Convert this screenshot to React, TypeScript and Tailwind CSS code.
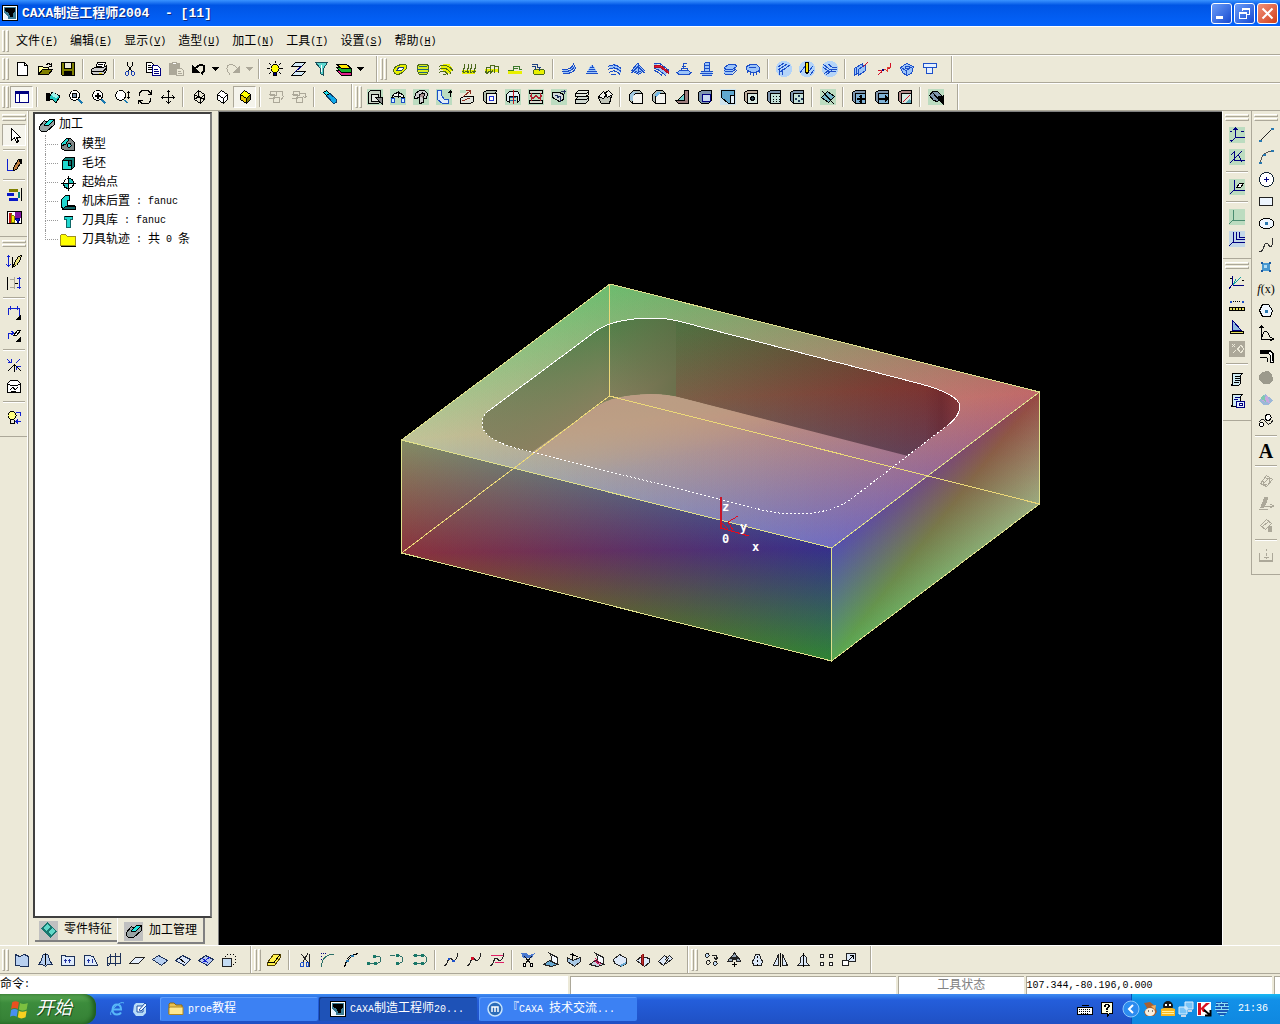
import { Fragment, type ReactNode } from "react";

// [path, fill, stroke]
type Shape = [string, string?, string?];

const K = "#000";
const N = "#000080";
const B = "#1c4fc8";
const G = "#aca899";
const T = "#008080";
const SEA = "#bcdcc0";
const SLATE = "#7f96ae";
const bg = (c: string): Shape => ["M0 0h16v16h-16z", c, "none"];
const disc = (c: string): Shape => ["M8 0a8 8 0 1 0 .1 0z", c, "none"];
const cube: Shape = ["M1.5 3.5l3-2h10l-1 3h-9v10l-3-3z", "#b4c0b0", K];
const cubeFront: Shape = ["M4.5 4.5h10v10h-10z", "#f4f4ee", K];
const blueCube: Shape = ["M1.5 3.5l3-2h10v3h-10v10l-3-3z", SLATE, K];
const blueFront: Shape = ["M4.5 4.5h10v10h-10z", "#7fb2d6", K];
const curve: Shape = ["M1 13.5q3 0 4-5t5 0q3 1 5-7", "none", "#222"];

const icons: Record<string, Shape[]> = {
  new: [["M3.5 1.5h7l3 3v10h-10z", "#fff"], ["M10.5 1.5v3h3"]],
  open: [["M1.5 13.5v-8h4l1 1h5v2", "#ffff9c"], ["M1.5 13.5l4-5h10l-4 5z", "#808000"], ["M9.5 3.5l2-1 2 1 1 1M14.5 2v3h-3"]],
  save: [["M1.5 1.5h13v13h-12l-1-1z", "#808000"], ["M4.5 1.5h7v6h-7z", "#ece9d8"], ["M4.5 10.5h7v4h-7z", K]],
  print: [["M4.5 7.5l2-6h8l-2 6z", "#fff"], ["M0.5 8.5l3-2h9l3-2v5l-3 4h-10l-2-1z", "#ccc"], ["M1 10.5h11l3-3M7 3.5h5M6 5.5h5"], ["M8 12h3", "none", "#d8c800"]],
  cut: [["M5.5 1v3l4 6M10.5 1v3l-4 6"], ["M3.5 11.5l1-1h2v3l-1 1h-1l-1-1zM9.5 10.5h2l1 1v2l-1 1h-1l-1-1z", "none", "#1a3fb0"]],
  copy: [["M1.5 1.5h5l2 2v8h-7z", "#fff"], ["M3 4.5h3M3 6.5h4M3 8.5h4"], ["M7.5 4.5h5l3 3v7h-8z", "#fff", N], ["M9 8.5h4M9 10.5h5M9 12.5h5", "none", N]],
  paste: [["M1 2h11v12h-11z", G, "none"], ["M4.5 1.5h4v2h-4z", "#fff", G], ["M8.5 7.5h5l2 2v5h-7z", "#ece9d8", G], ["M10 10.5h3M10 12.5h4", "none", G]],
  undo: [["M1 4v8h8z", K, "none"], ["M3 8.5q3-5 7-5 4 0 4 4 0 3-3 6M4 8.5q3-4 6-4 3 0 3 3 0 3-3 5"]],
  redo: [["M15 4v8h-8z", G, "none"], ["M13 8.500q-3-5-7-5-4 0-4 4 0 3 3 6", "none", G]],
  bulb: [["M8 3.5a4 4 0 1 0 .1 0z", "#ffff00"], ["M6.5 11.5h3v3h-3z", N], ["M8.5 0v2M2 2l2 2M14 2l-2 2M0 7.5h3M13 7.5h3M2 13l2-2M14 13l-2-2"]],
  sheets: [["M5.5 1.5h10l-4 4h-10z", "#d6ecf8"], ["M5.5 10.5h10l-4 4h-10z", "#d6ecf8"], ["M12 5l-7 6", "none", N]],
  filter: [["M2.5 1.5h12l-4 6v7l-3-2v-5z", "#5fd8d0", "#17505a"], ["M8 4l1 7", "none", "#fff"]],
  layers: [["M0.5 9.5l5 5h10v-3l-5-3z", "#e0208c"], ["M0.5 6.5l5 5h10v-3l-5-3z", "#18b030"], ["M0.5 3.5h10l5 4h-10z", "#ffe800"]],

  mill1: [["M1.5 10q0-4 6-6t7 1-5 7-8-2z", "#e8f000", "#4c6a1c"], ["M5 9q1-3 4-3t2 2-4 2-2-1z", "#fff", "#1c4080"]],
  mill2: [["M2 7q0-4 6-4t6 4-2 6h-8q-2-2-2-6z", "#d8ee20", "#4c6a1c"], ["M4 5.5h8M2 8.5h12M4 11.5h8", "none", "#1c6080"]],
  mill3: [["M1.5 8l4-5h6l3 5-2 5z", "#e8f000", "none"], ["M1 5.5q7-4 14 4M1 8.5q7-4 12 4M1 11.5q6-3 9 2M5 13.5h3", "none", "#4c6a1c"]],
  mill4: [["M1 9h14l-1 4h-13z", "#e8f000", "none"], ["M4 3l-2 9M8 3l-2 9M11 3l-2 9M15 3l-2 9M1 10l2 2 2-2M5 10l2 2 1-2M9 10l1 2 2-2M12 10l1 2 2-2", "none", "#4c6a1c"]],
  mill5: [["M1 8h14v3h-14z", "#e8f000", "none"], ["M2.5 13v-7h4v7M6.5 12v-8h4v8M10.5 11v-6h4v7M1 10l2 3 2-3M5 10l2 2 2-3", "none", "#4c6a1c"]],
  mill6: [["M1 10h14v3h-14z", "#e8f000", "none"], ["M1 9.5h5v-4h6v3h3M6 7.5h5", "none", "#3c7a2c"]],
  mill7: [["M3 11q0-3 6-3t6 3-6 3-6-3z", "#e8f000", "#4c6a1c"], ["M2 3.5h5v3h4M2 5.5h3v3M9 6v4", "none", "#1c4080"]],

  sweep1: [["M1.5 12.5h6l6-5v-4l-5 5-7 1z", "#9cc4f8", "none"], ["M1 8.5q9 1 12-6M1 10.5q10 1 13-6M2 12.5q10 1 13-6", "none", B]],
  sweep2: [["M3 13l2-7 3-2 3 2 2 7z", "#9cc4f8", "none"], ["M8 3.5v2M6 6.5h4M5 8.5h6M3 10.5h10M2 12.5h12", "none", B]],
  sweep3: [["M1 6l7-3 6 4v5l-6-4z", "#9cc4f8", "none"], ["M1 5.500q7-4 13 2M1 8.500q7-4 13 2M2 11.500q6-4 11 2M4 13.500h5", "none", B]],
  sweep4: [["M1.5 9.5l6-7 7 7-6 4z", "#9cc4f8", B], ["M4 9.5l4-4 4 4-4 2zM8.5 2v9M1 12l3-2M15 12l-3-2", "none", B]],
  sweep5: [["M1 3l6 1 8 6-2 4-12-7z", "#9cc4f8", "none"], ["M1 2.5h6l9 7M1 7.5l4 1 8 6M1 9.5l3 1 5 4", "none", B], ["M1 4h6l8 6v2l-8-6h-6z", "#e01830", "#b01028"]],
  sweep6: [["M1 11.5l3-2h8l3 2-2 2h-10z", "#9cc4f8", B], ["M5 9.5v-2h6v2M7.5 7v-4l3-1M6 5.5h4", "none", B]],
  sweep7: [["M5 2h5v8l4 2-2 2h-9l-2-2 4-2z", "#9cc4f8", "none"], ["M5.5 1.5h5M5.5 1.5v8M10.5 1.5v8M5 4.5h6M5 7.5h6M2 10.5h12M1 12.5h13M3 14.5h10", "none", B]],
  sweep8: [["M2 7l4-3h8v4l-4 5h-8z", "#9cc4f8", "none"], ["M2.5 6.5l4-3h7l1 2-4 3h-7zM2.5 9.5l1 1h7l4-3M2.5 12.5l1 1h7l4-4", "none", B]],
  sweep9: [["M1.5 8.5v-3l4-2h6l3 3v3l-4 2h-5z", "#9cc4f8", B], ["M4 6.5h7M5.5 10v4M8.5 11v4M11.5 10v4M2.5 9v3M14.5 9v3", "none", B]],
  patch1: [disc("#b4d4f8"), ["M2 6l6-4M2 9l9-6M4 11l10-7M3 13.5v-6M6 14v-6h3", "none", B]],
  patch2: [disc("#b4d4f8"), ["M1 12l6-8M8 13l6-8M11 14l4-5", "none", B], ["M6.5 1.5h3v9l-1 2h-1l-1-2z", "#f8e000"]],
  patch3: [disc("#b4d4f8"), ["M1 3l6 5h8M1 6l5 4h8M6 3l4 3h5M2 13l5-4M4 14l6-5", "none", B]],
  ruled: [["M1.5 7.5l8-5v6l-8 6z", "#9cc4f8", B], ["M5.5 8.5l7-5v6l-7 5zM3.5 7v6", "#9cc4f8", B], ["M10 6l5-5", "none", "#d01028"]],
  trackpt: [["M2 9.5h3v2l-3 2M11 7.5h2q1 0 2-5", "none", "#d01028"], ["M5 10q3-3 6 0v-4h4", "none", "#e04030"], ["M6 8h2v2h-2z", N, "none"]],
  frame3d: [["M1.5 6.5l6-4 7 3-2 7-5 2-4-3z", "#9cc4f8", B], ["M2 6.5l5 3 7-4M7.5 10v4M6 5h4v2h-4z", "none", B]],
  teeTool: [["M1.5 2.5h13v4h-13z", "#e4f0ff", B], ["M4.5 6.5v6h6v-6", "#e4f0ff", B]],

  window: [["M1.5 2.5h13v11h-13z", "#fff", N], ["M1 2h14v3h-14zM5 5h1v9h-1z", N, "none"]],
  redraw: [["M3 11l4-8 8 4-4 7-4-4z", "#20c8c0", K], ["M8 3l6 4-3 2-5-3z", "#a0f0e8", "none"], ["M1 12v-8h4v8z", K, "none"]],
  zoomWin: [["M6.5 1.5a5 5 0 1 0 .1 0z", "#fff"], ["M4.5 4.5h4v4h-4z", SLATE], ["M10 10l4 4M11 10l4 4M10 11l4 4", "none", "#1878b0"]],
  zoomIn: [["M6.5 1.5a5 5 0 1 0 .1 0z", "#fff"], ["M4 6h5v1h-5zM6 4h1v5h-1z", K], ["M10 10l4 4M11 10l4 4M10 11l4 4", "none", "#1878b0"]],
  zoomDyn: [["M6.5 1.5a5 5 0 1 0 .1 0z", "#fff"], ["M10 11l3 3M11 11l3 3", "none", "#1878b0"], ["M14.5 2v8M13 3.5h3M13 8.5h3"]],
  rotate: [["M2 7q0-6 6-6 4 0 6 4M14 9q0 6-6 6-4 0-6-4M14.5 1v4h-4M1.5 15v-4h4"]],
  pan: [["M8.5 1v14M1 8.5h14M6.5 3.5l2-2 2 2M6.5 12.5l2 2 2-2M3.5 6.5l-2 2 2 2M12.5 6.5l2 2-2 2"]],
  wire: [["M3.5 5.5l4-4 6 4v5l-4 4-6-4zM3.5 5.5l6 4 4-4M9.5 9.5v5M7.5 1.5v6l6 3M7.5 7.5l-4 3"]],
  hidden: [["M3.5 5.5l4-4 6 4v5l-4 4-6-4z", "#fff"], ["M3.5 5.5l6 4 4-4M9.5 9.5v5"]],
  shade: [["M3.5 5.5l4-4 6 4-4 4z", "#ffff00"], ["M3.5 5.5v5l6 4v-5z", "#e8c800"], ["M9.5 9.5l4-4v5l-4 4z", "#808000"]],
  group1: [["M2.5 2.5h6v4h-6zM5.5 8.5h6v5h-6z", "none", G], ["M0.5 5.5h6v4h-6M9 2.5h5v4M13 11l3-4", "none", G]],
  group2: [["M2.5 2.5h6v4h-6zM5.5 8.5h6v5h-6z", "none", G], ["M0.5 5.5h6v4h-6M8 4.5h6v3M12 7l2 2 2-2", "none", G]],
  torch: [["M1.5 3.5l3-2 10 9v3l-3 1z", "#10a8e8", "#10406c"], ["M1.5 3.5l3 3 3-2-3-3z", "#20e0f0", K]],

  solid1: [bg(SEA), ["M1.5 3.5l2-2h10v10l-2 3h-10z", "#c9d3c4"], ["M4.5 5.5h7v7h-7z", "#e4e8e0"], ["M8 8h7v7z", "#888", K]],
  solid2: [bg(SEA), ["M1.5 8.5l3-4 4-1 4 2 2 3-7-1z", "#f4f4ee"], ["M1.5 9.5h3v4h-3zM11.5 9.5h3v4h-3z", "#d8f0ff", B], ["M8.5 2v7"]],
  solid3: [bg(SEA), ["M1.5 9.5l1-5 4-3h5l3 3-1 5h-3v4l-4 1v-6l-4 1z", "#d0d0d0"], ["M6.5 8v-2l3-2 2 1-1 4", "#a89090"]],
  solid4: [bg(SEA), ["M1.5 1.5h4v5l3 4h4v4h-6l-5-4z", "#e0ecf8", B], ["M14.5 8v-6M12.5 4l2-2 2 2"]],
  solid5: [["M1.5 9.5l3-2h10v5l-3 2h-10z", "#e0e4dc"], ["M4 8l7-6M11 5v-4h-4M3 12l8-3", "none", "#8c3020"], ["M1 1h6v3h-6z", SEA, "none"]],
  solid6: [cube, cubeFront, ["M7.5 7.5h4v4h-4z", "#fff", "#2030d0"]],
  solid7: [bg(SEA), ["M1.5 5.5l3-3h8l2 3v6l-2 2v-6h-8v6l-3-2z", "#e0f0f4"], ["M5 8.5h6M5 11.5h6", "none", "#1060a0"], ["M8.5 1v14", "none", "#c01820"]],
  solid8: [bg(SEA), ["M1.5 1.5h13v3h-13zM1.5 11.5h13v3h-13z", "#d8dcd0"], ["M2 6.5l3 3 3-3 3 3 3-3M3.5 4v8M12.5 4v8", "none", "#b02030"]],
  solid9: [bg(SEA), ["M1.5 3.5h7l4 2v5l-4 2-7-4z", "#d0d8d8"], ["M4 6l5 2v5M13.5 1v4M10 2.5h5M6 9l4-2", "none", "#203060"]],
  solid10: [["M1.5 4.5l3-3h10v4l-3 2h-10z", "#e4e8e0"], ["M1.5 10.5l3-3h10v4l-3 3h-10z", "#d0d8d0"], ["M2 4.5h10l3-2M2 10.5h10l3-2"]],
  solid11: [["M2.5 7.5l12-1-2 8h-8l-3-5z", "#c0c4b8"], ["M1.5 7.5l5-5 3 3-3 4zM7.5 4.5l4-3 4 4-5 3z", "#f4f4ee"]],
  fillet1: [["M1.5 5.5l4-4h6l3 3v10h-10l-3-3z", "#b4c0b8"], ["M4.5 14.5v-7l3-3h7v10z", "#f4f4ee"], ["M2 5.5l3-3h5l-3 2-2 3v5l-3-2z", "#a0c8e0", "none"]],
  fillet2: [["M1.5 5.5l4-4h6l3 3v10h-10l-3-3z", "#b4c0b8"], ["M4.5 14.5v-7l4-3h6v10z", "#f4f4ee"], ["M3 6l3-3h4l-5 5z", "#70b8e8", "none"]],
  rib: [["M1.5 11.5h9v-10h4v13h-10z", "#9c7c7c"], ["M3.5 11.5l7-7v7z", "#70d0d0"]],
  shell: [["M1.5 3.5l3-2h10v10l-3 3h-7l-3-3z", SLATE], ["M5.5 5.5h8v7h-8z", "#c8d8f0", N]],
  draft: [bg("#cfe4ee"), ["M1.5 1.5h13v5h-4v8h-2l-7-6z", "#60a8d0"], ["M10.5 6.5h4v8h-4z", "#e4f0f8"]],
  hole: [["M1.5 3.5l3-2h10v13h-10l-3-3z", "#c0b0a0"], ["M4.5 4.5h10v10h-10z", "#d8e8e0"], ["M9.5 7.5l2 1v2l-2 1-2-1v-2z", "#304858"]],
  arrayL: [blueCube, ["M4.5 4.5h10v10h-10z", "#c4e0d8"], ["M7 7h1v1h-1zM10 7h1v1h-1zM13 7h1v1h-1zM7 10h1v1h-1zM10 10h1v1h-1zM13 10h1v1h-1zM7 12h1v1h-1zM10 12h1v1h-1zM13 12h1v1h-1z", K, "none"]],
  arrayC: [blueCube, ["M4.5 4.5h10v10h-10z", "#c4e0d8"], ["M9 6h2v2h-2zM6 9h2v2h-2zM12 9h2v2h-2zM9 11h2v2h-2z", "#203858", "none"]],
  basePlane: [bg(SEA), ["M1.5 8.5l6-6 7 5-6 6z", "#78b8c8"], ["M2 2l12 13"]],
  mold1: [blueCube, blueFront, ["M9 6h1v8h-1zM6 9h8v1h-8z", K], ["M8 7.5h3M8 12.5h3"]],
  mold2: [blueCube, blueFront, ["M5 9h6v1h-6zM11.5 7v5l3-2.5z", K]],
  mold3: [["M1.5 3.5l3-2h10v3h-10v10l-3-3z", "#b08888"], ["M4.5 4.5h10v10h-10z", "#d8e8e0"], ["M6 13l7-7", "none", "#d01028"], ["M8 14l4-4 2 1v3z", "#60a8b8", "none"]],
  mold4: [bg(SEA), ["M1.5 6.5l3-4h5l4 4-4 6-4-1z", SLATE], ["M4 3l10 11M10 8l5-1v8z", K]],

  cursor: [["M5.5 1.5v12l3-3 2 5 2-1-2-4h4z", "#fff"]],
  sketch: [["M1.5 2v11h6", "none", "#1020d0"], ["M7.5 13.5v-3l5-8 3 2-5 8z", "#c08040", K], ["M12 2h3v4z", K]],
  panelA: [["M3 2h9v3h-9z", "#808000", "none"], ["M1 6h7v3h-7zM3 11h9v3h-9z", "#0818c8", "none"], ["M12 5h2v6h-2z", T, "none"], ["M15.5 1v13"]],
  panelB: [["M1.5 2.5h14v12h-14z", "#fff", K], ["M9 3h6v6h-6z", "#8010a0", "none"], ["M3 4h3v10h-3z", "#c01818", "none"], ["M5.5 5.5l3 2v6h-3z", "#ffe800", "#808000"], ["M9 9h5l-2 5z", "#1020d0", N]],
  dimV: [["M2.5 2v12M0.5 4.5l2-2 2 2M0.5 11.5l2 2 2-2", "none", "#1020d0"], ["M6.5 4v11"], ["M7.5 13.5l1-4 4-6 3-1-1 4-4 6z", "#e8e080"]],
  dimH: [["M1.5 2v13"], ["M4 4.5h4v8h-4M8.5 2v12", "none", G], ["M9 8.5h3"], ["M13.5 2v12M11 3.5h4M11 12.5h4", "none", "#1020d0"]],
  dimArr: [["M2.5 10v-7h11v8M4.5 1v4M11.5 1v4", "none", "#1020d0"], ["M15 10v5h-6z", K, "none"]],
  dimEdit: [["M2.5 12v-6h5M5.5 4l2 2-2 2", "none", "#1020d0"], ["M7.5 8.5l4-5h3l-4 5z", "#fff"], ["M15 10v5h-6z", K, "none"]],
  snapPts: [["M1 2l4 4M14 2l-4 4M1.5 5.5h4v-4M10 9.5h5M10.500 9v4", "none", "#1020d0"], ["M8.5 7v8M8 8l-6 6M9 8l6 6"]],
  blankBox: [["M1.5 4.5l3-3h7l3 3v9h-13z", "#fff"], ["M1 4.5l4 2h6l4-2M4 10.5l3-2 2 2 3-2M5 12.5h5"]],
  lampDim: [["M6 2.5a4 4 0 1 0 .1 0z", "#ffff80"], ["M4.5 11v3h4v-3"], ["M10 3h4v4M15 12.5h-4M12 10.5l-2 2 2 2", "none", "#1020d0"]],

  csys1: [bg(SEA), ["M6.5 1v9h9M7 10l-5 5M4.5 3l2-2 2 2", "none", N], ["M1 4h2M12 4h3M1 13h2", "none", N]],
  csys2: [bg(SEA), ["M5.5 2v9h10M1 14l12-12M9 5l4 8M2 6l4-4", "none", N]],
  csys3: [bg(SEA), ["M5.5 1v10h10M5 11l-4 4", "none", N], ["M7.5 8.5l3-4h4l-3 4z", "#fff"]],
  csys4: [bg(SEA), ["M4.5 1v10h11M4 11l-4 4", "none", "#4a8c70"]],
  csys5: [bg("#c4d8e8"), ["M4.5 1v10h11M4 11l-4 4M7.500 1v7h8M10.500 1v5h5", "none", N]],
  measPt: [["M3.5 1v9l11 1M3 10l-3 4", "none", N], ["M4 10l8-8M4 10l3-6", "none", "#10a0a0"], ["M1 3h2M13 5h2", "none", K]],
  measLen: [["M1 4h2v2h-2zM13 4h2v2h-2z", B, "none"], ["M4 4.5h1M6 4.5h1M8 4.5h1M10 4.5h1", "none", K], ["M0.5 10.5h15v3h-15z", "#e8e060"], ["M3.5 11v2M6.5 11v2M9.5 11v2M12.5 11v2"]],
  measAng: [["M3.5 1.5l9 10h-9z", "#90b8e0", N], ["M1.5 12.5h13v2h-13z", "#e8e060", K]],
  measOff: [bg(G), ["M3 3l3 3M3 6l3-3M8 9l4-5 3 4-3 4-4-5M4 12l3-3", "none", "#ece9d8"]],
  doc1: [["M3.5 2.5h10l-2 2v8l-2 2h-7l1-2z", "#d0ecf4", K], ["M6 5.5h5M6 7.5h5M6 9.5h5M5 11.5h5"]],
  doc2: [["M3.5 1.5h10l-2 2v8l-2 2h-7l1-2z", "#d0ecf4", K], ["M6 4.5h5M5 6.5h4", "none", N], ["M7.5 8.500h8v6h-8z", "#e4f0ff", N], ["M10.5 10.5h3v2h-3z", "#fff", N]],

  line: [["M2 14l12-12", "none", "#222"], ["M1 13h3v2h-3zM13 1h3v2h-3z", "#2878b0", "none"]],
  arc: [["M2.5 15q0-12 12-13", "none", "#555"], ["M1 13h3v2h-3zM5 5h3v2h-3zM13 1h3v2h-3z", "#2878b0", "none"]],
  circle: [["M8.5 1.5a7 7 0 1 0 .1 0z", "#fff", "#123"], ["M6 8h5v1h-5zM8 6h1v5h-1z", N, "none"]],
  rect: [["M1.5 4.5h13v8h-13z", "#eef6ff", "#222"]],
  ellipse: [["M1.500 8.500q0-5 7-5t7 5-7 5-7-5z", "#eef6ff"], ["M7 7h3v3h-3z", "#2878b0", "none"]],
  spline: [["M1 14.500q3 1 5-5t5-1 4-7", "none", "#333"]],
  point: [["M4 4h8v8h-8z", "#4898d0", "none"], ["M3 3h2v2h-2zM11 3h2v2h-2zM3 11h2v2h-2zM11 11h2v2h-2z", "#1858a0", "none"], ["M6 6h3v3h-3z", "#b0dcf4", "none"]],
  polygon: [["M4.5 1.5h6l4 6-2 6h-8l-3-6z", "#eef6ff"], ["M7 7h3v3h-3z", "#2878b0", "none"]],
  conic: [["M3.5 1v13h12M1.5 3l2-2 2 2M12.500 12l3 2-3 2M4 12q3-12 8 0"]],
  offset: [["M2 3h10l3 3v9h-3v-7l-2-2h-8z", "#fff", K], ["M2 10h6l1 1v4M2 4h10l2 2v8M2 5h9"]],
  proj: [["M4 3l6-1 4 3 1 6-4 4h-6l-4-4v-4z", "#9c9a8c", "none"]],
  section: [["M1 10l6-7 8 6-4 5h-6z", "#9cb8d8", "none"], ["M4 10l5-6 3 8z", "#c8a8e0", "none"], ["M2 7l4-4 2 8z", "#80c8b0", "none"]],
  blend: [["M1 9q4-5 7 0t7-2", "none", "#222"], ["M10 1.5a3 3 0 1 0 .1 0z", "#fff"], ["M3.500 9.500a2 2 0 1 0 .1 0z", "#fff"]],
  dim1: [["M2.5 10.500l6-8 6 4-6 7zM5.500 10.500l5-5M5.500 8v3h3M8 5.500h3v3", "none", G]],
  dim2: [["M3 12l4-10 3 1-4 9zM1 14.5h9", G, G], ["M7 11.500h8M12.500 9l3 2-3 2", "none", G]],
  dim3: [["M2.5 8.500l6-6 5 4-6 6zM5 8.500l5-3", "none", G], ["M10 9h4v6h-4z", G, "none"]],
  dim4: [["M1.5 6v8h13v-8M8.5 2v2M8.5 6v3M8.5 11v1", "none", G], ["M6 10h5v1h-5zM1 13h14v2h-14z", G, "none"]],

  surf1: [["M1.5 2.5l4 2 5-2 4 2v10h-4l-9-1z", "#b8d0f0", "#1c3058"]],
  surf2: [["M5.500 12.500h-4q3-3 4-9l3-2 3 2q1 6 4 9h-5l-2 2z", "#b8d0f0", "#1c3058"], ["M8.5 2v11"]],
  surf3: [["M1.5 3.5h3l2 1h8v9h-13z", "#e0ecfc", "#1c3058"], ["M5.5 7v4M9.5 7v4M4 8.5h3M8 8.5h3", "none", "#2030a0"]],
  surf4: [["M1.5 3.5h3l6 1 4 9h-13z", "#e0ecfc", "#1c3058"], ["M5.5 7v4M9.5 7v4M4 8.5h3", "none", "#2030a0"]],
  surf5: [["M4.5 1.5v10l-3 3M4.5 4.5h10v7h-13M9.5 1v13M1.5 14v-8l3-2M14.5 1v10", "none", "#1c3058"]],
  surf6: [["M0.5 11.5l6-6h9l-6 6z", "#e4eefc", "#222"]],
  surf7: [["M0.5 7.5l6-4 9 5-6 5z", "#b8d0f0", "#1c3058"]],
  surf8: [["M0.5 8.5l7-5 8 4-6 6z", "#d8e4f8", "#1c3058"], ["M4 6l6 5"]],
  surf9: [["M0.5 8.5l7-5 8 4-6 6z", "#b8c8f0", "#1c3058"], ["M4 6l6 5M4 11l8-6", "none", "#1020d0"]],
  surf10: [["M1.5 6.5h9v8h-9z", "#c4dcf4", "#222"], ["M4 4h1v1h-1zM6 2h1v1h-1zM9 2h1v1h-1zM12 2h1v1h-1zM14 4h1v1h-1zM14 7h1v1h-1zM14 10h1v1h-1zM12 12h1v1h-1z", K, "none"]],
  eraser: [["M1.5 10.5l6-8h7v3l-6 8h-7z", "#fff04c", "#504000"], ["M2 10.5h6l6-8"]],
  trim: [["M4 2l7 8M11 1l-5 9M12.5 2v13", "none", "#222"], ["M4.500 10.500h2v4h-3v-3zM9.500 10.500h2v4h-2z", "none", B]],
  filletC: [["M1.5 15q0-12 13-13", "none", "#2c7068"], ["M1 1h1v1h-1zM3 1h1v1h-1zM5 1h1v1h-1zM1 4h1v1h-1zM1 7h1v1h-1z", N, "none"]],
  chamfer: [["M1.5 15l2-6M9 3.5l6-2M5 8l4-4M4 7l4-4"], ["M3 8h3v2h-3zM8 3h3v2h-3z", "#2878b0", "none"]],
  join1: [["M1 11.500h8q6 0 6-4t-6-3", "none", "#2c7068"], ["M1 10h3v3h-3zM7 3h3v3h-3zM8 10h3v3h-3z", "#187868", "none"]],
  join2: [["M1 3.500h5M8 3.500q6 0 6 4t-6 4", "none", "#2c7068"], ["M7 2h3v3h-3zM7 10h3v3h-3z", "#187868", "none"]],
  join3: [["M1 3.500h9q5 0 5 4t-5 4h-9", "none", "#2c7068"], ["M2 2h3v3h-3zM9 2h3v3h-3zM2 10h3v3h-3zM9 10h3v3h-3z", "#187868", "none"]],
  crv1: [curve, ["M9 8h3v2h-3zM5 6h2v2h-2z", "#1c4fc8", "none"]],
  crv2: [curve, ["M5 5h3v3h-3z", "#d01028", "none"]],
  crv3: [curve, ["M2 3.5h12M6 10.5h9", "none", "#e02068"]],
  strim: [["M1 1h5l3 2 6-2-3 5h-9z", "#4878d0", "none"], ["M4 4l8 9M12 4l-8 9", "none", "#111"], ["M3.5 11.5h2v3h-2zM10.5 11.5h2v3h-2z", "#fff"]],
  sfil: [["M6.5 1.5l8 4v7l-6-3v-5z", "#f4f8fc", "#222"], ["M0.5 12.5l6-4 8 4-6 2z", "#68a8d0", "#222"]],
  sjoin: [["M1.5 5.5l5 3 8-3v4l-6 5-7-5z", "#a8c8e4", "#222"], ["M6.5 8v-6l5 3M8 4l-4-2"]],
  sext: [["M6.5 1.5l8 4v7l-6-3v-5z", "#f4f8fc", "#222"], ["M0.5 12.5l6-4 8 4-6 2z", "#c8d0dc", "#222"], ["M6 6l6 6M5 8l6 5", "none", "#d01058"]],
  ssew: [["M1.5 7.5l6-5 7 4v5l-5 3-7-3z", "#dce8f8", "#222"], ["M8 13l6-3v2l-5 3z", "#68a8d0", "none"]],
  scut: [["M1.5 8.5l5-4 8 2v4l-5 4z", "#dce8f8", "#222"], ["M8 2v11l-2-2v-8", "#c03030", "#801010"]],
  spar: [["M0.5 9.5l6-6 4 3-5 7zM8.500 11.500l6-5-3-3-5 5", "#dce8f8", "#222"]],
  move: [["M4 1.5a2 2 0 1 0 .1 0zM12 9.500a2 2 0 1 0 .1 0z", "#c4dcf4", "#222"], ["M5 8.500a2 2 0 1 0 .1 0zM9 3.5h4v4M11 5.5l2 2 2-2", "none", "#222"]],
  rot: [["M8.5 1l3 4h-6zM1.5 9.5l2-3h10l1 3h-4v-2h-4v2z", "#98a8b8", "#222"], ["M8.5 10v5M6 12.500h5"]],
  mirrorP: [["M6.5 2.5h4q1 4 3 7l-1 4h-8l-1-4q2-3 3-7z", "#dce8f8", "#222"], ["M8.5 4v2M8.5 8v2M8.5 12v2"]],
  mirror: [["M6.5 2.5v11h-5zM10.5 2.5v11h5z", "#dce8f8", "#222"], ["M8.5 1v14"]],
  bell: [["M5.5 10.5v-5l3-3 3 3v5l3 3h-12z", "#dce8f8", "#222"], ["M8.5 1v14"]],
  array: [["M2.5 2.500h3v3h-3zM11.500 2.500h3v3h-3zM2.500 10.500h3v3h-3zM11.500 10.500h3v3h-3z", "#fff", "#222"]],
  scale: [["M5.5 1.5h9v8h-9z", "#dce8f8", "#222"], ["M1.5 8.5h6v5h-6z", "#fff", "#222"], ["M8 8l4-4M9 3.5h3v3"]],

  machining: [["M0.500 9.500l5-6 4 3 2-4h4v5l-8 7h-5l-2-2z", "#9aa4a4"], ["M5.500 7.500l5-5h5l-6 6h-4z", "#20e8e0"]],
  model: [["M1.5 7.5l5-6h4l4 4v8h-10l-3-2z", "#808888"], ["M5.5 7.500l-4 1v-2l5-5h3z", "#20d8d0"], ["M9 6.500a2 2 0 1 0 .1 0z", "#30e0e0"]],
  stock: [["M2.5 4.5l3-3h9v9l-3 3h-9z", "#108078"], ["M2.5 4.5h9v9h-9z", "#20d8d0"], ["M8.500 4.500h3v5h-3z", "#106868"]],
  startPt: [["M8.500 3.500q5 0 5 5h-5zM3.500 8.500h5v5q-5 0-5-5z", "#20c8c0"], ["M8.5 3.500a5 5 0 1 0 .1 0zM8.5 1v15M1 8.500h15"]],
  post: [["M1.5 12.5v-7l4-4h4v5h-2v5h7v3h-12z", "#20d8d0"], ["M6 12h9v3h-12z", "#106868", K]],
  toolLib: [["M4.5 3.5h8v3h-2v8h-4v-8h-2z", "#20d8d0", "#106868"], ["M4.5 3.5h8"]],
  folder: [["M0.5 13.5v-10l1-1h4l2 2h8v9z", "#ffff00", "#a09020"], ["M1 14.5h15v-10", "none", K]],
  feature: [["M0 6l6-6 10 9-7 7z", "#187870", "none"], ["M2 6l4-4 4 3-5 4zM7 10l4-4 3 3-4 4z", "#60d8c8", "none"]],
  app: [["M0.5 0.5h15v15h-15z", "#3c7c94", "#000"], ["M1.5 1.5h13v13h-13z", "none", "#fff"], ["M3 3h10v4l-2 1v4h-3l-1-4-4-2z", K, "none"], ["M2 8l4 3v3h-4z", "#e8f4ff", "none"]],
};

const Icon = ({ name }: { name: string }) => (
  <svg viewBox="0 0 16 16" className="size-4 shrink-0" shapeRendering="crispEdges" aria-hidden="true">
    {icons[name].map(([d, fill = "none", stroke = "#000"], i) => (
      <path key={i} d={d} fill={fill} stroke={stroke} />
    ))}
  </svg>
);

const pressed = ["window", "shade", "cursor"];

function Grip({ vertical }: { vertical?: boolean }) {
  return vertical ? (
    <span className="flex h-[13px] w-full shrink-0 flex-col items-center justify-center gap-px">
      <span className="h-[3px] w-6 border border-[#aca899] border-t-white border-l-white" />
      <span className="h-[3px] w-6 border border-[#aca899] border-t-white border-l-white" />
    </span>
  ) : (
    <span className="flex w-[10px] shrink-0 items-center justify-center gap-px">
      <span className="h-[22px] w-[3px] border border-[#aca899] border-t-white border-l-white" />
      <span className="h-[22px] w-[3px] border border-[#aca899] border-t-white border-l-white" />
    </span>
  );
}

// "|" is a separator, "v" the small drop-down arrow
function Tools({ items, vertical }: { items: string; vertical?: boolean }) {
  const names = items.split(" ");
  return (
    <>
      {names.map((name, i) => {
        if (name === "|")
          return vertical ? (
            <span key={i} className="flex h-2 w-full shrink-0 items-center justify-center">
              <span className="h-[2px] w-[22px] border-t border-b border-t-[#aca899] border-b-white" />
            </span>
          ) : (
            <span key={i} className="flex w-2 shrink-0 items-center justify-center">
              <span className="h-5 w-[2px] border-r border-l border-r-white border-l-[#aca899]" />
            </span>
          );
        if (name === "v")
          return (
            <button key={i} aria-label="more" className="flex w-[11px] shrink-0 items-center justify-center">
              <svg viewBox="0 0 7 4" className="h-1 w-[7px]" shapeRendering="crispEdges">
                <path d="M0 0h7l-3.500 4z" fill={names[i - 1] === "redo" ? G : K} />
              </svg>
            </button>
          );
        const look = pressed.includes(name)
          ? "border-[#aca899] border-r-white border-b-white bg-[#f5f4ec]"
          : "border-transparent";
        return (
          <button
            key={i}
            aria-label={name}
            className={`flex h-[22px] shrink-0 items-center justify-center border ${vertical ? "w-6" : "w-[23px]"} ${look}`}
          >
            {name === "text" ? (
              <span className="font-['Liberation_Serif',serif] text-[20px] leading-5 font-bold">A</span>
            ) : name === "fx" ? (
              <span className="font-['Liberation_Serif',serif] text-[12px] leading-4">
                <i>f</i>(x)
              </span>
            ) : (
              <Icon name={name} />
            )}
          </button>
        );
      })}
    </>
  );
}

function Band({ items, vertical }: { items: string; vertical?: boolean }) {
  return vertical ? (
    <div className="flex w-full flex-col items-center border-b border-b-[#aca899] pb-2">
      <Grip vertical />
      <Tools items={items} vertical />
    </div>
  ) : (
    <div className="flex items-center border-r border-r-[#aca899] pr-[10px] shadow-[1px_0_0_#fff]">
      <Grip />
      <Tools items={items} />
    </div>
  );
}

const Row = ({ children }: { children: ReactNode }) => (
  <div className="flex h-7 shrink-0 gap-px overflow-hidden border-t border-b border-t-white border-b-[#aca899]">
    {children}
  </div>
);

// half-width characters are six pixels wide, full-width ones twelve
const Half = ({ children }: { children: ReactNode }) => (
  <span className="font-['Liberation_Mono','Noto_Sans_CJK_SC',monospace] text-[10px] whitespace-pre">{children}</span>
);

const menus = [
  ["文件", "F"],
  ["编辑", "E"],
  ["显示", "V"],
  ["造型", "U"],
  ["加工", "N"],
  ["工具", "T"],
  ["设置", "S"],
  ["帮助", "H"],
];

const tree = [
  { icon: "model", text: "模型" },
  { icon: "stock", text: "毛坯" },
  { icon: "startPt", text: "起始点" },
  { icon: "post", text: "机床后置", half: " : fanuc" },
  { icon: "toolLib", text: "刀具库", half: " : fanuc" },
  { icon: "folder", text: "刀具轨迹", half: " : ", count: true },
];

type Pt = [number, number];

// triangle with one colour at each corner, blended linearly
function Tri({ id, p, c }: { id: string; p: [Pt, Pt, Pt]; c: [string, string, string] }) {
  const [[x0, y0], [x1, y1], [x2, y2]] = p;
  const dirs = [
    [0.5, 0.5, 0, 0],
    [0, 0, 1, 0],
    [0, 0, 0, 1],
  ];
  return (
    <g className="isolate" transform={`matrix(${x1 - x0} ${y1 - y0} ${x2 - x0} ${y2 - y0} ${x0} ${y0})`}>
      {c.map((color, i) => (
        <Fragment key={i}>
          <linearGradient id={`${id}${i}`} x1={dirs[i][0]} y1={dirs[i][1]} x2={dirs[i][2]} y2={dirs[i][3]}>
            <stop offset="0" stopColor="#000" />
            <stop offset="1" stopColor={color} />
          </linearGradient>
          <path d="M0 0H1L0 1z" fill={`url(#${id}${i})`} className={i ? "mix-blend-plus-lighter" : ""} />
        </Fragment>
      ))}
    </g>
  );
}

const tA: Pt = [610, 284];
const tB: Pt = [1040, 392];
const tC: Pt = [831, 548];
const tD: Pt = [401, 440];
const bB: Pt = [1040, 504];
const bC: Pt = [831, 661];
const bD: Pt = [401, 553];

const rimBack = "M487 412L596 331Q612 319 650 318Q668 318 682 322L917 383Q960 394 960 407Q959 417 948 425";
const rimFront = "L851 499Q830 514 795 514Q775 514 755 508L515 448Q482 438 482 424Q482 417 487 412";
const floor = "M531 453L596 407Q612 395 650 394Q668 394 682 398L908 456L851 499Q830 514 795 514Q775 514 755 508z";

function Viewport() {
  return (
    <svg viewBox="219 112 1003 833" className="h-full w-full" shapeRendering="crispEdges" role="img" aria-label="model">
      <defs>
        <clipPath id="pocket">
          <path d={`${rimBack}${rimFront}z`} />
        </clipPath>
        <clipPath id="floorClip">
          <path d={floor} />
        </clipPath>
        <linearGradient id="leftWall" gradientUnits="userSpaceOnUse" x1="482" y1="430" x2="620" y2="335">
          <stop offset="0" stopColor="#7d8560" />
          <stop offset="1" stopColor="#4f8249" />
        </linearGradient>
        <linearGradient id="leftLow" gradientUnits="userSpaceOnUse" x1="570" y1="340" x2="612" y2="410">
          <stop offset="0" stopColor="#8c8060" stopOpacity="0" />
          <stop offset="1" stopColor="#8c8060" />
        </linearGradient>
        <linearGradient id="corner" gradientUnits="userSpaceOnUse" x1="600" y1="0" x2="675" y2="0">
          <stop offset="0" stopColor="#3c5a30" stopOpacity="0" />
          <stop offset="1" stopColor="#3c5a30" stopOpacity=".4" />
        </linearGradient>
        <linearGradient id="rightEnd" gradientUnits="userSpaceOnUse" x1="925" y1="0" x2="958" y2="0">
          <stop offset="0" stopColor="#601c24" stopOpacity="0" />
          <stop offset=".5" stopColor="#601c24" stopOpacity=".3" />
          <stop offset="1" stopColor="#a04040" stopOpacity=".3" />
        </linearGradient>
        <linearGradient id="floor" gradientUnits="userSpaceOnUse" x1="650" y1="394" x2="665" y2="460">
          <stop offset="0" stopColor="#bc9c84" />
          <stop offset="1" stopColor="#bc9c84" stopOpacity="0" />
        </linearGradient>
      </defs>

      <Tri id="top1" p={[tA, tB, tD]} c={["#6cbc6e", "#c06868", "#c0c498"]} />
      <Tri id="top2" p={[tC, tB, tD]} c={["#706cc0", "#c06868", "#c0c498"]} />
      <Tri id="front1" p={[tD, tC, bD]} c={["#848c64", "#36308c", "#8a323c"]} />
      <Tri id="front2" p={[bC, tC, bD]} c={["#308434", "#36308c", "#8a323c"]} />
      <Tri id="side1" p={[tC, tB, bC]} c={["#5450b0", "#984844", "#58a850"]} />
      <Tri id="side2" p={[bB, tB, bC]} c={["#9cac80", "#984844", "#58a850"]} />

      <g clipPath="url(#pocket)">
        <path d="M470 310H676V470H470z" fill="url(#leftWall)" />
        <path d="M470 310H676V470H470z" fill="url(#leftLow)" />
        <path d="M600 310H676V410H600z" fill="url(#corner)" />
        <Tri id="wall1" p={[[676, 310], [970, 385], [676, 400]]} c={["#487440", "#7c2c2c", "#7c6048"]} />
        <Tri id="wall2" p={[[970, 475], [970, 385], [676, 400]]} c={["#58385c", "#7c2c2c", "#7c6048"]} />
        <path d="M925 370H970V460H925z" fill="url(#rightEnd)" />
      </g>
      <g clipPath="url(#floorClip)">
        <Tri id="floor1" p={[tA, tB, tD]} c={["#6cbc6e", "#c06868", "#c0c498"]} />
        <Tri id="floor2" p={[tC, tB, tD]} c={["#706cc0", "#c06868", "#c0c498"]} />
        <path d={floor} fill="url(#floor)" />
      </g>

      <g fill="none" stroke="#dfe08c">
        <path d="M610 284L1039.500 392L831.500 548L401.500 440zM401.500 440V553L831.500 661L1039.500 504V392M831.500 548V661" />
        <path d="M609.500 284V396M401.500 553L609.500 396L1039.500 504" stroke="#ecd878" />
      </g>
      <g fill="none" stroke="#fff">
        <path d={rimBack} />
        <path d={`M948 425${rimFront}`} strokeDasharray="2 2" />
      </g>
      <path d="M720 497H722V529H720z" fill="#c81428" />
      <path d="M721 528L749 536M728 522L738 516M728 522L733 530M722 523L728 529" fill="none" stroke="#e00c20" />
      <g fill="#fff" className="font-['DejaVu_Sans_Mono',monospace] text-[12px] font-bold">
        <text x="722" y="511">z</text>
        <text x="740" y="531">y</text>
        <text x="722" y="543">0</text>
        <text x="752" y="551">x</text>
      </g>
    </svg>
  );
}

const winBtn = "flex size-[21px] items-center justify-center rounded-[3px] border border-white";
const taskBtn =
  "flex h-6 w-[158px] shrink items-center gap-1 overflow-hidden rounded-[2px] px-2 text-[12px] whitespace-nowrap text-white";

export default function App() {
  return (
    <div className="flex h-screen flex-col overflow-hidden bg-[#ece9d8] font-['Liberation_Mono','Noto_Sans_CJK_SC',monospace] text-[12px] leading-4 text-black">
      <header className="flex h-[26px] shrink-0 items-center bg-linear-to-b from-[#3a93ff] via-[#0055e5] via-20% to-[#0463fb] px-[2px]">
        <Icon name="app" />
        <h1 className="flex-1 pt-px pl-1 text-[13px] font-bold whitespace-pre text-white [text-shadow:1px_1px_#0a2a80]">
          CAXA制造工程师2004  - [11]
        </h1>
        <div className="flex gap-[2px]">
          <button aria-label="minimize" className={`${winBtn} bg-linear-to-br from-[#6c9cf8] to-[#1848d0]`}>
            <svg viewBox="0 0 13 13" className="size-[13px]">
              <path d="M1 9h7v3h-7z" fill="#fff" />
            </svg>
          </button>
          <button aria-label="restore" className={`${winBtn} bg-linear-to-br from-[#6c9cf8] to-[#1848d0]`}>
            <svg viewBox="0 0 13 13" className="size-[13px]" fill="none" stroke="#fff" shapeRendering="crispEdges">
              <path d="M4.500 4V1.500h7v6h-3M4 2.500h8M1.500 5.500h7v6h-7zM1 6.500h8" />
            </svg>
          </button>
          <button aria-label="close" className={`${winBtn} bg-linear-to-br from-[#f09078] to-[#d03c10]`}>
            <svg viewBox="0 0 13 13" className="size-[13px]" stroke="#fff" strokeWidth="2">
              <path d="M1.500 1.500l10 10M11.500 1.500l-10 10" />
            </svg>
          </button>
        </div>
      </header>

      <nav className="flex h-[29px] shrink-0 items-center border-t border-b border-t-white border-b-[#aca899]">
        <Grip />
        {menus.map(([label, key]) => (
          <button key={key} className="flex shrink-0 items-center px-[6px] pt-[2px]">
            <span>{label}</span>
            <Half>
              (<u>{key}</u>)
            </Half>
          </button>
        ))}
      </nav>

      <Row>
        <Band items="new open save | print | cut copy paste undo v redo v | bulb sheets filter layers v" />
        <Band items="mill1 mill2 mill3 mill4 mill5 mill6 mill7 | sweep1 sweep2 sweep3 sweep4 sweep5 sweep6 sweep7 sweep8 sweep9 | patch1 patch2 patch3 | ruled trackpt frame3d teeTool" />
      </Row>
      <Row>
        <Band items="window | redraw zoomWin zoomIn zoomDyn rotate pan | wire hidden shade | group1 group2 | torch" />
        <Band items="solid1 solid2 solid3 solid4 solid5 solid6 solid7 solid8 solid9 solid10 solid11 | fillet1 fillet2 rib shell draft hole arrayL arrayC | basePlane | mold1 mold2 mold3 | mold4" />
      </Row>

      <main className="flex min-h-0 flex-1">
        <aside className="flex w-7 shrink-0 flex-col border-r border-r-white">
          <Band vertical items="cursor | sketch | panelA panelB" />
          <Band vertical items="dimV dimH | dimArr dimEdit | snapPts blankBox | lampDim" />
        </aside>

        <section className="flex w-[190px] shrink-0 flex-col border-l border-l-[#aca899] pt-px pr-[6px] pl-1">
          <div className="min-h-0 flex-1 border-2 border-[#404040] border-r-[#808080] bg-white pt-px">
            <div className="flex h-5 items-center gap-1 pl-1">
              <Icon name="machining" />
              <span>加工</span>
            </div>
            <ul>
              {tree.map((node, i) => (
                <li key={node.text} className="flex h-[19px] items-center pl-[10px]">
                  <span className="flex h-full w-[15px] shrink-0 flex-col">
                    <span className="h-[10px] w-[13px] border-b border-l border-dotted border-[#999]" />
                    {i < tree.length - 1 && <span className="flex-1 border-l border-dotted border-[#999]" />}
                  </span>
                  <Icon name={node.icon} />
                  <span className="flex items-center pl-[6px]">
                    {node.text}
                    {node.half && <Half>{node.half}</Half>}
                    {node.count && (
                      <>
                        共<Half> 0 </Half>条
                      </>
                    )}
                  </span>
                </li>
              ))}
            </ul>
          </div>
          <div className="flex h-[27px] shrink-0 items-start pl-[2px]">
            <button className="mt-px flex h-[23px] w-[82px] items-center gap-[6px] border-b-2 border-b-[#808080] pt-px pl-1">
              <span className="flex size-[19px] items-center justify-center bg-[#c0c0c0]">
                <Icon name="feature" />
              </span>
              零件特征
            </button>
            <button className="flex h-[26px] w-[88px] items-center gap-[6px] border-r-2 border-b-2 border-l border-[#808080] border-l-white pt-[2px] pl-[6px]">
              <span className="flex size-[19px] items-center justify-center bg-[#c0c0c0]">
                <Icon name="machining" />
              </span>
              加工管理
            </button>
          </div>
        </section>

        <div className="min-w-0 flex-1 border-t border-l border-[#808080] bg-black">
          <Viewport />
        </div>

        <aside className="flex w-[29px] shrink-0 flex-col border-l border-l-white">
          <Band vertical items="csys1 csys2 | csys3 | csys4 csys5" />
          <Band vertical items="measPt measLen measAng measOff | doc1 doc2" />
        </aside>
        <aside className="flex w-[29px] shrink-0 flex-col">
          <div className="border-l border-l-[#aca899]">
            <Band
              vertical
              items="line arc circle rect ellipse spline point fx polygon conic offset proj section blend | text | dim1 dim2 dim3 | dim4"
            />
          </div>
        </aside>
      </main>

      <div className="flex h-[29px] shrink-0 gap-px overflow-hidden border-t border-b border-t-white border-b-[#aca899]">
        <Band items="surf1 surf2 surf3 surf4 surf5 surf6 surf7 surf8 surf9 surf10" />
        <Band items="eraser | trim filletC chamfer join1 join2 join3 | crv1 crv2 crv3 | strim sfil sjoin sext ssew scut spar" />
        <Band items="move rot mirrorP mirror bell array scale" />
      </div>

      <footer className="flex h-5 shrink-0 items-stretch gap-[2px] pt-[2px]">
        <label className="flex flex-[569] items-center bg-white">
          命令<Half>:</Half>
          <input className="h-4 min-w-0 flex-1 outline-none" />
        </label>
        <span className="flex-[326] border-t border-l border-[#aca899] bg-white" />
        <span className="flex flex-[125] items-center justify-center border-t border-l border-[#aca899] bg-white text-[#808080]">
          工具状态
        </span>
        <span className="flex flex-[246] items-center border-t border-l border-[#aca899] bg-white">
          <Half>107.344,-80.196,0.000</Half>
        </span>
        <span className="w-[6px] border-t border-l border-[#aca899] bg-white" />
      </footer>

      <footer className="flex h-[30px] shrink-0 items-center bg-linear-to-b from-[#3f8cf3] via-[#245edb] via-20% to-[#1f50c4]">
        <button className="flex h-full w-24 shrink-0 items-center gap-1 rounded-r-xl bg-linear-to-b from-[#5eac56] via-[#3c8c3c] via-30% to-[#358035] pl-[10px] text-white shadow-[inset_-3px_0_4px_#1d5a1d]">
          <svg viewBox="0 0 18 18" className="size-5">
            <path d="M2 3q3-2 6 0l-1 6q-3-2-6 0z" fill="#e85020" />
            <path d="M9 3.500q3 2 7 0l-1 6q-4 2-7 0z" fill="#7cc040" />
            <path d="M1 10q3-2 6 0l-1 6q-3-2-6 0z" fill="#4890f0" />
            <path d="M8 10.500q3 2 7 0l-1 6q-4 2-7 0z" fill="#f8d020" />
          </svg>
          <span className="pl-[2px] text-[18px] leading-6 italic [text-shadow:1px_1px_#1c4a1c]">开始</span>
        </button>
        <div className="flex w-16 shrink-0 items-center gap-[7px] pl-[13px]">
          <button aria-label="browser">
            <svg viewBox="0 0 16 16" className="size-4" fill="none" stroke="#58b8f8" strokeWidth="2">
              <path d="M4 8.500h8q0-5-4-5t-4.500 5q0 5 4.500 5 3 0 4-2" />
              <path d="M2 14q-2-2 4-8t9-4" strokeWidth="1" />
            </svg>
          </button>
          <button aria-label="desktop">
            <svg viewBox="0 0 16 16" className="size-4">
              <path d="M2 4l2-2h8l2 3v7l-3 3h-7l-3-4z" fill="#b8dcf8" />
              <path d="M5 5h6v6h-6z" fill="#fff" stroke="#1c50a8" />
              <path d="M7 9l6-7 2 2-6 6z" fill="#e8f4ff" stroke="#1c50a8" />
            </svg>
          </button>
        </div>
        <button className={`${taskBtn} bg-[#3c81f3] shadow-[inset_1px_1px_#5c9cfc]`}>
          <svg viewBox="0 0 16 16" className="size-4 shrink-0">
            <path d="M1 13V3l1-1h4l2 2h6v2" fill="#e8c050" stroke="#906810" />
            <path d="M1 13.500V7l1-1h13v7.500z" fill="#ffe890" stroke="#b08820" />
          </svg>
          <span>
            <Half>proe</Half>教程
          </span>
        </button>
        <button className={`${taskBtn} ml-px bg-[#1e52b7] pl-[11px] shadow-[inset_1px_1px_#123a8c]`}>
          <Icon name="app" />
          <span>
            <Half>CAXA</Half>制造工程师<Half>20...</Half>
          </span>
        </button>
        <button className={`${taskBtn} ml-[2px] bg-[#3c81f3] shadow-[inset_1px_1px_#5c9cfc]`}>
          <svg viewBox="0 0 16 16" className="size-4 shrink-0">
            <circle cx="8" cy="8" r="7" fill="#2c6cb8" stroke="#c8e4fc" strokeWidth="1.500" />
            <path d="M5 11V6h6v5M8 6v5" fill="none" stroke="#fff" strokeWidth="1.500" />
          </svg>
          <span>
            『<Half>CAXA </Half>技术交流<Half>...</Half>
          </span>
        </button>
        <span className="flex-1" />
        <div className="flex shrink-0 items-center gap-[6px] pr-4">
          <svg viewBox="0 0 16 16" className="size-4" shapeRendering="crispEdges">
            <path d="M.5 6.500h15v7h-15z" fill="#fff" stroke="#000" />
            <path d="M2 8.500h12M2 10.500h12M4 12.500h8" stroke="#000" strokeDasharray="1 1" />
            <path d="M5 4.500h7" stroke="#000" />
          </svg>
          <svg viewBox="0 0 16 16" className="size-4" shapeRendering="crispEdges">
            <path d="M2.500 1.500h11v11h-3l-2 3v-3h-6z" fill="#ffffe0" stroke="#000" />
            <path d="M5 4h1v-1h4v1h1v2h-1v1h-1v2h-2v-2h1v-1h1v-2h-2v2h-2zM7 10h2v1h-2z" fill="#000" />
          </svg>
        </div>
        <div className="flex h-full shrink-0 items-center gap-[2px] border-l border-l-[#0a50b8] bg-linear-to-b from-[#19b9f3] via-[#1290e8] via-20% to-[#0f88e0] pr-3">
          <button aria-label="show icons" className="-ml-[10px]">
            <svg viewBox="0 0 18 18" className="size-[18px]">
              <circle cx="9" cy="9" r="8" fill="#2c8cf0" stroke="#8cc8fc" />
              <path d="M11 5L7 9l4 4" fill="none" stroke="#fff" strokeWidth="2" />
            </svg>
          </button>
          <svg viewBox="0 0 16 16" className="size-4">
            <path d="M2 2l6-1 5 4 2 6-3 4H4l-2-4 3-4z" fill="#a86030" />
            <ellipse cx="8" cy="11" rx="5" ry="4" fill="#f8f0e0" />
            <path d="M9 5l5-1-1 5z" fill="#f0b060" />
            <path d="M6 10h1M10 10h1" stroke="#000" />
          </svg>
          <svg viewBox="0 0 16 16" className="size-4">
            <circle cx="8" cy="5" r="5" fill="#181818" />
            <path d="M5 4h2M9 4h2" stroke="#fff" strokeWidth="2" />
            <path d="M1 8l3-1h8l3 1v7H1z" fill="#f8b820" />
            <path d="M2 10.500h12M2 12.500h12" stroke="#fff0a0" />
          </svg>
          <svg viewBox="0 0 16 16" className="size-4">
            <path d="M7 1h8v7H7zM1 6h8v7H1z" fill="#78c4f8" stroke="#e0f0fc" />
            <path d="M3 15h5M10 10h4" stroke="#c8d8e8" strokeWidth="2" />
          </svg>
          <svg viewBox="0 0 16 16" className="size-4">
            <path d="M1 1h14v14H1z" fill="#fff" />
            <path d="M2 2h3v5l5-5h4L8 7l3 4H7l-2-3v6H2z" fill="#d81020" />
            <path d="M8 9l6 5M14.500 9v5.500H9" stroke="#000" strokeWidth="2" fill="none" />
          </svg>
          <svg viewBox="0 0 16 16" className="size-4">
            <path d="M2 1h12v9l-3 4-3 1-3-1-3-4z" fill="#1c58b8" />
            <path d="M2 2.500h12M1 5.500h14M1 8.500h14M3 11.500h10M6 14.500h4M7.500 1v2M5 3v3M10.500 3v3M7.500 6v3" stroke="#90e0f4" />
          </svg>
          <time className="pl-[6px] font-['Liberation_Mono',monospace] text-[10px] text-white">21:36</time>
        </div>
      </footer>
    </div>
  );
}
